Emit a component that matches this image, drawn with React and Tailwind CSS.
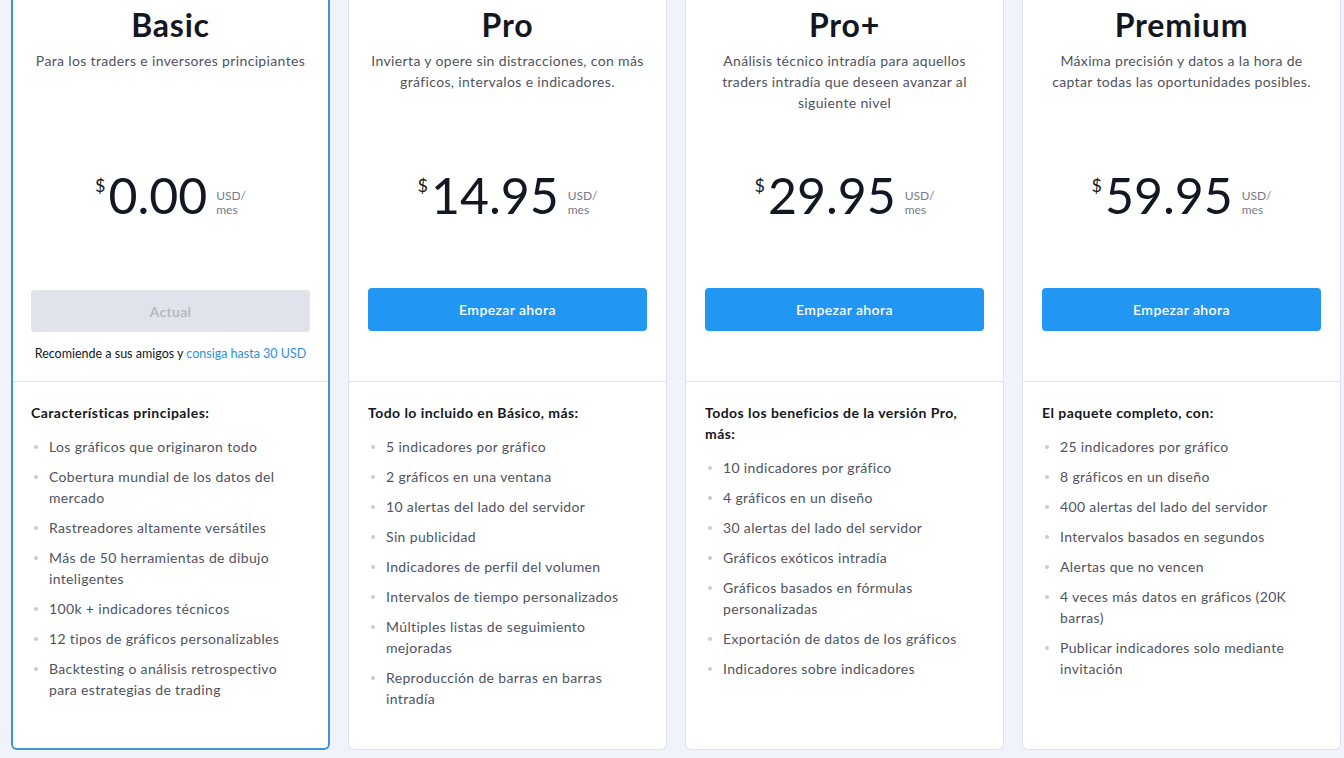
const plans = [
  {
    name: "Basic",
    desc: "Para los traders e inversores principiantes",
    price: "0.00",
    current: true,
    heading: "Características principales:",
    features: [
      "Los gráficos que originaron todo",
      "Cobertura mundial de los datos del mercado",
      "Rastreadores altamente versátiles",
      "Más de 50 herramientas de dibujo inteligentes",
      "100k + indicadores técnicos",
      "12 tipos de gráficos personalizables",
      "Backtesting o análisis retrospectivo para estrategias de trading",
    ],
  },
  {
    name: "Pro",
    desc: "Invierta y opere sin distracciones, con más gráficos, intervalos e indicadores.",
    price: "14.95",
    heading: "Todo lo incluido en Básico, más:",
    features: [
      "5 indicadores por gráfico",
      "2 gráficos en una ventana",
      "10 alertas del lado del servidor",
      "Sin publicidad",
      "Indicadores de perfil del volumen",
      "Intervalos de tiempo personalizados",
      "Múltiples listas de seguimiento mejoradas",
      "Reproducción de barras en barras intradía",
    ],
  },
  {
    name: "Pro+",
    desc: "Análisis técnico intradía para aquellos traders intradía que deseen avanzar al siguiente nivel",
    price: "29.95",
    heading: "Todos los beneficios de la versión Pro, más:",
    features: [
      "10 indicadores por gráfico",
      "4 gráficos en un diseño",
      "30 alertas del lado del servidor",
      "Gráficos exóticos intradía",
      "Gráficos basados en fórmulas personalizadas",
      "Exportación de datos de los gráficos",
      "Indicadores sobre indicadores",
    ],
  },
  {
    name: "Premium",
    desc: "Máxima precisión y datos a la hora de captar todas las oportunidades posibles.",
    price: "59.95",
    heading: "El paquete completo, con:",
    features: [
      "25 indicadores por gráfico",
      "8 gráficos en un diseño",
      "400 alertas del lado del servidor",
      "Intervalos basados en segundos",
      "Alertas que no vencen",
      "4 veces más datos en gráficos (20K barras)",
      "Publicar indicadores solo mediante invitación",
    ],
  },
];

function PlanCard({ plan }) {
  const px = plan.current ? "px-[18px]" : "px-[19px]";
  return (
    <div
      className={
        "flex flex-col bg-white rounded-b-[6px] " +
        (plan.current ? "border-2 border-t-0 border-[#3d94dc]" : "border border-t-0 border-[#e0e3eb]")
      }
    >
      {/* top part */}
      <div className={"h-[381px] flex flex-col " + px}>
        <h2 className="pt-[5px] text-[32px] leading-[40px] font-bold tracking-[0.8px] text-center text-[#131722]">
          {plan.name}
        </h2>
        <p className="mt-[5px] h-[120px] text-[14px] leading-[21px] tracking-[0.35px] text-center text-[#50535e]">
          {plan.desc}
        </p>
        <div className="flex justify-center items-start h-[52px] text-[#131722]">
          <span className="text-[18px] leading-none mt-[6px] mr-[3px]">$</span>
          <span className="text-[50px] leading-none">{plan.price}</span>
          <span className="ml-[9px] mt-[19px] text-[12px] leading-[14px] text-[#787b86]">
            USD/
            <br />
            mes
          </span>
        </div>
        {plan.current ? (
          <>
            <div className="mt-[68px] h-[42px] rounded-[4px] bg-[#e0e3eb] flex items-center justify-center text-[14px] font-semibold tracking-[0.3px] text-[#b2b5be]">
              Actual
            </div>
            <p className="mt-[12px] text-[12.5px] leading-[20px] text-center text-[#131722]">
              Recomiende a sus amigos y <span className="text-[#2d8fdf]">consiga hasta 30 USD</span>
            </p>
          </>
        ) : (
          <button className="mt-[66px] h-[43px] rounded-[4px] bg-[#2196f3] text-white text-[14px] font-semibold tracking-[0.4px]">
            Empezar ahora
          </button>
        )}
      </div>
      <div className="border-t border-[#e0e3eb]" />
      {/* features */}
      <div className={"pt-[20px] pb-[20px] " + px}>
        <h3 className="text-[14px] leading-[21px] font-bold tracking-[0.45px] text-[#131722] pr-[20px]">
          {plan.heading}
        </h3>
        <ul className="mt-[13px] flex flex-col gap-[9px]">
          {plan.features.map((f) => (
            <li key={f} className="flex text-[14px] leading-[21px] tracking-[0.35px] text-[#50535e]">
              <span className="w-[18px] shrink-0 flex items-start pt-[9px] pl-[3px]">
                <span className="w-[4px] h-[4px] rounded-full bg-[#c9ccd4]" />
              </span>
              <span className="pr-[8px]">{f}</span>
            </li>
          ))}
        </ul>
      </div>
    </div>
  );
}

export default function App() {
  return (
    <div
      className="min-h-screen bg-[#f0f3fa] pl-[11px] pb-[8px]"
      style={{ fontFamily: "Lato, 'Open Sans', sans-serif" }}
    >
      <div className="grid grid-cols-[repeat(4,319px)] gap-x-[18px] h-[750px]">
        {plans.map((p) => (
          <PlanCard key={p.name} plan={p} />
        ))}
      </div>
    </div>
  );
}
